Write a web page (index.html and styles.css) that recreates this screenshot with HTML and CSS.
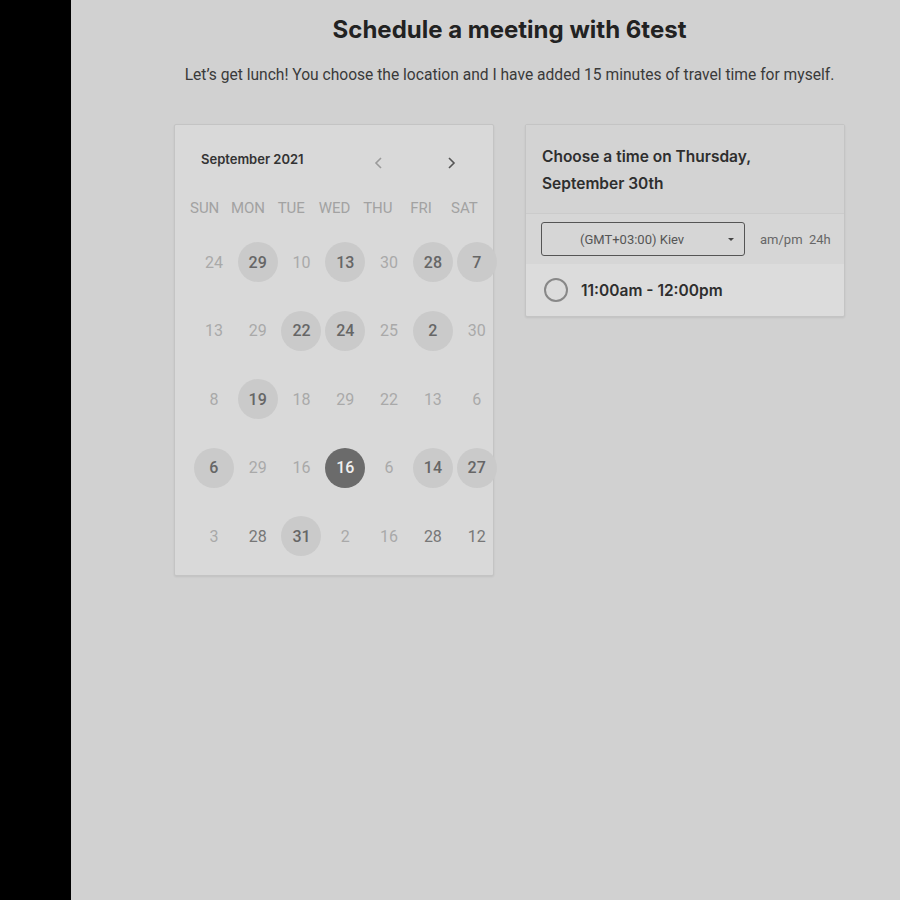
FILE: index.html
```html
<!DOCTYPE html>
<html>
<head>
<meta charset="utf-8">
<link rel="stylesheet" href="styles.css">
</head>
<body>
<div class="app">
  <aside class="sidebar"></aside>
  <main class="main">
    <h1 class="title">Schedule a meeting with 6test</h1>
    <p class="subtitle">Let’s get lunch! You choose the location and I have added 15 minutes of travel time for myself.</p>
    <div class="panels">
      <section class="card calendar">
        <div class="cal-head">
          <span class="month">September 2021</span>
          <div class="nav">
            <span class="arrow">
              <svg width="14" height="14" viewBox="0 0 14 14"><path d="M9 2 L4 7 L9 12" fill="none" stroke="#9a9a9a" stroke-width="1.6"/></svg>
            </span>
            <span class="arrow">
              <svg width="14" height="14" viewBox="0 0 14 14"><path d="M5 2 L10 7 L5 12" fill="none" stroke="#555" stroke-width="1.6"/></svg>
            </span>
          </div>
        </div>
        <div class="weekdays">
          <span>SUN</span><span>MON</span><span>TUE</span><span>WED</span><span>THU</span><span>FRI</span><span>SAT</span>
        </div>
        <div class="days">
          <span class="d">24</span><span class="d av">29</span><span class="d">10</span><span class="d av">13</span><span class="d">30</span><span class="d av">28</span><span class="d av">7</span>
          <span class="d">13</span><span class="d">29</span><span class="d av">22</span><span class="d av">24</span><span class="d">25</span><span class="d av">2</span><span class="d">30</span>
          <span class="d">8</span><span class="d av">19</span><span class="d">18</span><span class="d">29</span><span class="d">22</span><span class="d">13</span><span class="d">6</span>
          <span class="d av">6</span><span class="d">29</span><span class="d">16</span><span class="d sel">16</span><span class="d">6</span><span class="d av">14</span><span class="d av">27</span>
          <span class="d">3</span><span class="d dk">28</span><span class="d av">31</span><span class="d">2</span><span class="d">16</span><span class="d dk">28</span><span class="d dk">12</span>
        </div>
      </section>
      <section class="card times">
        <div class="times-head">Choose a time on Thursday,<br>September 30th</div>
        <div class="tz-row">
          <div class="select">
            <span class="select-text">(GMT+03:00) Kiev</span>
            <span class="caret"></span>
          </div>
          <span class="fmt">am/pm&nbsp;&nbsp;24h</span>
        </div>
        <div class="slot">
          <span class="radio"></span>
          <span class="slot-text">11:00am - 12:00pm</span>
        </div>
      </section>
    </div>
  </main>
</div>
</body>
</html>
```
FILE: styles.css
```css
html, body {
  margin: 0;
  padding: 0;
  height: 100%;
}
body {
  background: #d1d1d1;
  font-family: Roboto, "Liberation Sans", sans-serif;
  color: #333;
}
.app {
  display: flex;
  min-height: 900px;
}
.sidebar {
  width: 71px;
  flex: none;
  background: #000;
}
.main {
  flex: 1;
  padding-left: 48px;
  display: flex;
  flex-direction: column;
  align-items: center;
}
.title {
  margin: 16px 0 0;
  font-family: Inter, Roboto, sans-serif;
  font-weight: 700;
  font-size: 24px;
  line-height: 28px;
  letter-spacing: 0;
  color: #222;
}
.subtitle {
  margin: 21px 0 0;
  font-size: 15.6px;
  line-height: 20px;
  color: #3a3a3a;
}
.panels {
  margin-top: 39px;
  display: flex;
  gap: 31px;
}
.card {
  width: 320px;
  box-sizing: border-box;
  border: 1px solid #c4c4c4;
  border-radius: 2px;
  box-shadow: 0 1px 2px rgba(0,0,0,0.08);
}
.calendar {
  background: #d9d9d9;
  height: 452px;
  padding-top: 18px;
}
.cal-head {
  display: flex;
  align-items: center;
  height: 32px;
  padding-left: 26px;
}
.month {
  font-family: Inter, Roboto, sans-serif;
  font-weight: 600;
  font-size: 13px;
  color: #333;
  width: 162px;
}
.nav {
  display: flex;
  gap: 40px;
  padding-top: 7px;
}
.arrow {
  width: 32px;
  height: 20px;
  display: flex;
  align-items: center;
  justify-content: center;
}
.weekdays {
  margin-top: 23px;
  margin-left: 8px;
  display: grid;
  grid-template-columns: repeat(7, 43.3px);
  height: 20px;
  line-height: 20px;
  font-size: 15px;
  color: #a2a2a2;
  text-align: center;
}
.days {
  margin-top: 10px;
  margin-left: 17px;
  display: grid;
  grid-template-columns: repeat(7, 43.8px);
  grid-auto-rows: 68.5px;
  align-items: center;
  justify-items: center;
}
.d {
  width: 40px;
  height: 40px;
  border-radius: 50%;
  display: flex;
  align-items: center;
  justify-content: center;
  font-size: 16px;
  color: #a9a9a9;
}
.d.av {
  background: #cacaca;
  color: #666;
  font-weight: 500;
}
.d.dk {
  color: #777;
}
.d.sel {
  background: #6b6b6b;
  color: #f0f0f0;
  font-weight: 500;
}
.times {
  background: #dcdcdc;
  align-self: flex-start;
  overflow: hidden;
}
.times-head {
  background: #d3d3d3;
  padding: 18px 16px 16px;
  font-family: Inter, Roboto, sans-serif;
  font-weight: 600;
  font-size: 15.5px;
  line-height: 27px;
  color: #2e2e2e;
  border-bottom: 1px solid #cbcbcb;
}
.tz-row {
  background: #d6d6d6;
  height: 50px;
  display: flex;
  align-items: center;
  padding-left: 15px;
}
.select {
  width: 204px;
  height: 34px;
  box-sizing: border-box;
  border: 1px solid #555;
  border-radius: 3px;
  display: flex;
  align-items: center;
  position: relative;
}
.select-text {
  font-size: 13px;
  color: #555;
  margin-left: 38px;
}
.caret {
  position: absolute;
  right: 10px;
  top: 15px;
  width: 0;
  height: 0;
  border-left: 3px solid transparent;
  border-right: 3px solid transparent;
  border-top: 3px solid #444;
}
.fmt {
  margin-left: 15px;
  font-size: 13px;
  color: #666;
}
.slot {
  height: 52px;
  display: flex;
  align-items: center;
  padding-left: 18px;
}
.radio {
  width: 20px;
  height: 20px;
  border: 2px solid #888;
  border-radius: 50%;
  flex: none;
}
.slot-text {
  margin-left: 13px;
  font-family: Inter, Roboto, sans-serif;
  font-weight: 600;
  font-size: 15.5px;
  color: #2e2e2e;
}
```
